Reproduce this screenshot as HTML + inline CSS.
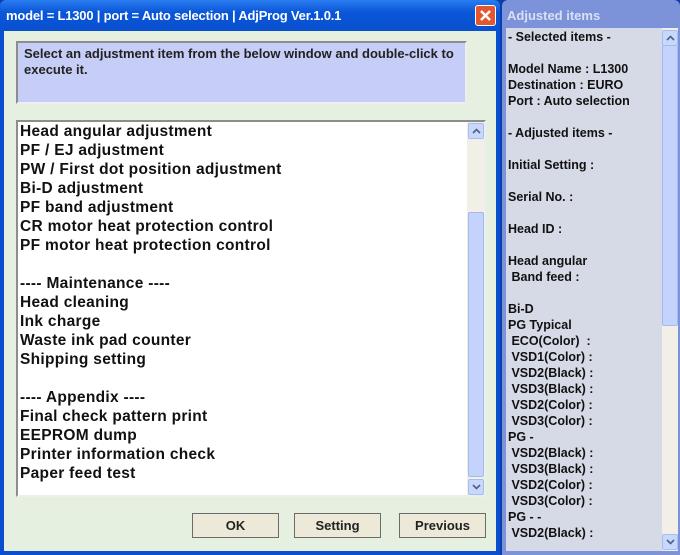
<!DOCTYPE html>
<html><head><style>
*{margin:0;padding:0;box-sizing:border-box}
body{width:680px;height:555px;background:#0b3fa8;font-family:"Liberation Sans",Arial,sans-serif;position:relative;overflow:hidden}
.lw{position:absolute;left:0;top:0;width:500px;height:555px;background:#0a4fd0;border-radius:6px 6px 0 0}
.lt{position:absolute;left:0;top:0;width:500px;height:31px;background:linear-gradient(#2a7cf0,#0a56d8 40%,#0850d0);border-radius:6px 6px 0 0}
.lt span{position:absolute;left:6px;top:8px;color:#fff;font-weight:bold;font-size:13px;letter-spacing:-0.2px}
.x{position:absolute;left:475px;top:5px;width:21px;height:21px;background:#e3562e;border:1px solid #fff;border-radius:3px}
.lb{position:absolute;left:4px;top:31px;width:492px;height:520px;background:#e6f0e1}
.info{position:absolute;left:16px;top:41px;width:451px;height:63px;background:#c6cdf6;border:2px solid #8d8d8d;border-right-color:#eee;border-bottom-color:#eee;font-size:13px;font-weight:bold;color:#222;padding:3px 6px;line-height:16px}
.list{position:absolute;left:16px;top:120px;width:470px;height:377px;background:#fff;border:2px solid #8d8d8d;border-right-color:#eee;border-bottom-color:#eee}
.list div{position:absolute;left:2px;top:0;font-size:15.5px;font-weight:bold;line-height:19px;color:#111;white-space:pre;letter-spacing:0.3px}
.sb{position:absolute;background:#f1efe6}
.arr{position:absolute;width:16px;height:16px;background:#c8d8fa;border:1px solid #a6bdf0;border-radius:2px}
.arr svg{position:absolute;left:3px;top:4px}
.thumb{position:absolute;background:#c3d3fb;border:1px solid #a4b9ee;border-radius:2px}
.btn{position:absolute;top:513px;height:25px;background:#ece9d8;border:1px solid #6b6b6b;font-size:13px;font-weight:bold;color:#222;text-align:center;line-height:23px}
.rw{position:absolute;left:502px;top:0;width:178px;height:555px;background:#7d93d9;border-radius:6px 6px 0 0}
.rt{position:absolute;left:507px;top:8px;color:#d8e0f6;font-weight:bold;font-size:13px}
.rp{position:absolute;left:506px;top:28px;width:172px;height:523px;background:#d6dae6}
.rp .t{position:absolute;left:2px;top:1px;font-size:12.5px;font-weight:bold;line-height:16px;color:#111;white-space:pre}
</style></head><body>
<div class="lw"></div>
<div class="lt"><span>model = L1300 | port = Auto selection | AdjProg Ver.1.0.1</span></div>
<div class="x"><svg width="19" height="19"><path d="M5 5L14 14M14 5L5 14" stroke="#fff" stroke-width="2.5"/></svg></div>
<div class="lb"></div>
<div class="info">Select an adjustment item from the below window and double-click to execute it.</div>
<div class="list"><div>Head angular adjustment
PF / EJ adjustment
PW / First dot position adjustment
Bi-D adjustment
PF band adjustment
CR motor heat protection control
PF motor heat protection control

---- Maintenance ----
Head cleaning
Ink charge
Waste ink pad counter
Shipping setting

---- Appendix ----
Final check pattern print
EEPROM dump
Printer information check
Paper feed test</div>
<div class="sb" style="left:449px;top:0;width:17px;height:373px"></div>
<div class="arr" style="left:450px;top:1px"><svg width="9" height="6"><path d="M1 5L4.5 1.5L8 5" stroke="#4d6185" stroke-width="1.6" fill="none"/></svg></div>
<div class="thumb" style="left:450px;top:90px;width:16px;height:265px"></div>
<div class="arr" style="left:450px;top:357px"><svg width="9" height="6"><path d="M1 1L4.5 4.5L8 1" stroke="#4d6185" stroke-width="1.6" fill="none"/></svg></div>
</div>
<div class="btn" style="left:192px;width:87px">OK</div>
<div class="btn" style="left:294px;width:87px">Setting</div>
<div class="btn" style="left:399px;width:87px">Previous</div>
<div class="rw"></div>
<div class="rt">Adjusted items</div>
<div class="rp"><div class="t">- Selected items -

Model Name : L1300
Destination : EURO
Port : Auto selection

- Adjusted items -

Initial Setting :

Serial No. :

Head ID :

Head angular
 Band feed :

Bi-D
PG Typical
 ECO(Color)  :
 VSD1(Color) :
 VSD2(Black) :
 VSD3(Black) :
 VSD2(Color) :
 VSD3(Color) :
PG -
 VSD2(Black) :
 VSD3(Black) :
 VSD2(Color) :
 VSD3(Color) :
PG - -
 VSD2(Black) :</div>
<div class="sb" style="left:156px;top:0;width:16px;height:523px"></div>
<div class="arr" style="left:156px;top:2px"><svg width="9" height="6"><path d="M1 5L4.5 1.5L8 5" stroke="#4d6185" stroke-width="1.6" fill="none"/></svg></div>
<div class="thumb" style="left:156px;top:17px;width:16px;height:281px"></div>
<div class="arr" style="left:156px;top:506px"><svg width="9" height="6"><path d="M1 1L4.5 4.5L8 1" stroke="#4d6185" stroke-width="1.6" fill="none"/></svg></div>
</div>
</body></html>
